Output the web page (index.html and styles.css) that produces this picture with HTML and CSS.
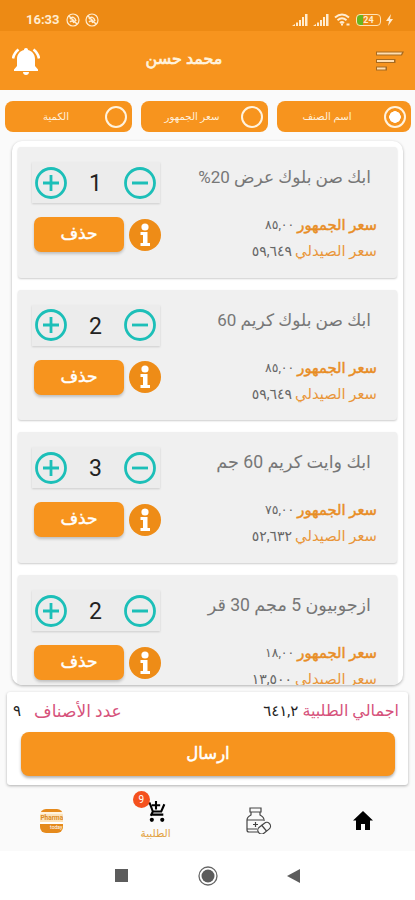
FILE: index.html
```html
<!DOCTYPE html>
<html lang="ar" dir="rtl">
<head>
    <meta charset="UTF-8">
    <meta name="viewport" content="width=device-width, initial-scale=1.0">
    <title>الطلبية</title>
    <link rel="stylesheet" href="styles.css">
</head>
<body>
    <!-- Shared icons -->
    <svg class="icon-defs" width="0" height="0">
        <symbol id="icon-plus" viewBox="0 0 32 32">
            <circle cx="16" cy="16" r="14.5" fill="none" stroke="currentColor" stroke-width="2.8"/>
            <path d="M8 16h16M16 8v16" stroke="currentColor" stroke-width="2.8"/>
        </symbol>
        <symbol id="icon-minus" viewBox="0 0 32 32">
            <circle cx="16" cy="16" r="14.5" fill="none" stroke="currentColor" stroke-width="2.8"/>
            <path d="M8 16h16" stroke="currentColor" stroke-width="2.8"/>
        </symbol>
        <symbol id="icon-info" viewBox="0 0 32 32">
            <circle cx="16" cy="16" r="16" fill="#ee8c17"/>
            <circle cx="16" cy="8" r="3.6" fill="#fff"/>
            <path d="M11.500 13h7v11H21v3h-9.500v-3H14v-8h-2.500z" fill="#fff"/>
        </symbol>
        <symbol id="icon-signal" viewBox="0 0 16 12">
            <path d="M0 12l3-2v2zM4 8.500h2V12H4zM7 6h2v6H7zM10 3h2v9h-2zM13 0h2.500v12H13z" fill="currentColor"/>
        </symbol>
        <symbol id="icon-mute" viewBox="0 0 14 14">
            <circle cx="7" cy="7" r="6" fill="none" stroke="currentColor" stroke-width="1.200"/>
            <path d="M3 3l8 8M4 6c2-3 5-2 6 2M4 9c2-2 3-1 4 1" fill="none" stroke="currentColor" stroke-width="1.500"/>
        </symbol>
    </svg>

    <div class="status-bar" dir="ltr">
        <span class="clock">16:33</span>
        <svg class="mute"><use href="#icon-mute"/></svg>
        <svg class="mute"><use href="#icon-mute"/></svg>
        <span class="spacer"></span>
        <svg class="signal"><use href="#icon-signal"/></svg>
        <svg class="signal"><use href="#icon-signal"/></svg>
        <svg class="wifi" viewBox="0 0 16 13" fill="none" stroke="currentColor" stroke-width="2">
            <path d="M1 4.500q7-6 14 0M3.500 7.300q4.500-4 9 0M6 10q2-1.700 4 0"/>
            <path d="M8 10.500v2M12.500 11.500h3"/>
        </svg>
        <span class="battery">24</span>
        <svg class="bolt" viewBox="0 0 7 12"><path d="M5 0L0 7h3l-1 5 5-7H4z" fill="currentColor"/></svg>
    </div>

    <header class="main-header">
        <svg class="menu" viewBox="0 0 28 20">
            <path d="M0 .500h28l-2 4H0zM0 8h19.500v4H0zM0 15.500h11v4H0z" fill="#a66a20"/>
            <path d="M1 1.500h25l-1 2H1zM1 9h17v2H1zM1 16.500h8.500v2H1z" fill="#ffdeb0"/>
        </svg>
        <h1>محمد حسن</h1>
        <svg class="bell" viewBox="0 0 28 28" fill="#fff">
            <path d="M14 1c-1.300 0-2 .8-2 2-4.300 1-7 4.500-7 9v7l-3 3.500V24h24v-1.500L23 19v-7c0-4.500-2.700-8-7-9 0-1.200-.7-2-2-2zM11 25h6c0 1.800-1.300 3-3 3s-3-1.200-3-3z"/>
            <path d="M6.500 2.500Q2 6 1 11.500M21.500 2.500Q26 6 27 11.500" fill="none" stroke="#fff" stroke-width="2.600"/>
        </svg>
    </header>

    <div class="filters">
        <div class="filter wide">
            <span class="radio checked"></span>
            <span class="filter-label">اسم الصنف</span>
        </div>
        <div class="filter">
            <span class="radio"></span>
            <span class="filter-label">سعر الجمهور</span>
        </div>
        <div class="filter">
            <span class="radio"></span>
            <span class="filter-label">الكمية</span>
        </div>
    </div>

    <main class="list">
        <article class="card">
            <div class="details">
                <h2>ابك صن بلوك عرض 20%</h2>
                <p class="price public"><b>سعر الجمهور</b> <span>٨٥,٠٠</span></p>
                <p class="price"><b>سعر الصيدلي</b> <span>٥٩,٦٤٩</span></p>
            </div>
            <div class="controls">
                <div class="stepper"><svg><use href="#icon-minus"/></svg><span>1</span><svg><use href="#icon-plus"/></svg></div>
                <div class="actions"><svg><use href="#icon-info"/></svg><button class="delete">حذف</button></div>
            </div>
        </article>
        <article class="card">
            <div class="details">
                <h2>ابك صن بلوك كريم 60</h2>
                <p class="price public"><b>سعر الجمهور</b> <span>٨٥,٠٠</span></p>
                <p class="price"><b>سعر الصيدلي</b> <span>٥٩,٦٤٩</span></p>
            </div>
            <div class="controls">
                <div class="stepper"><svg><use href="#icon-minus"/></svg><span>2</span><svg><use href="#icon-plus"/></svg></div>
                <div class="actions"><svg><use href="#icon-info"/></svg><button class="delete">حذف</button></div>
            </div>
        </article>
        <article class="card">
            <div class="details">
                <h2 class="large">ابك وايت كريم 60 جم</h2>
                <p class="price public"><b>سعر الجمهور</b> <span>٧٥,٠٠</span></p>
                <p class="price"><b>سعر الصيدلي</b> <span>٥٢,٦٣٢</span></p>
            </div>
            <div class="controls">
                <div class="stepper"><svg><use href="#icon-minus"/></svg><span>3</span><svg><use href="#icon-plus"/></svg></div>
                <div class="actions"><svg><use href="#icon-info"/></svg><button class="delete">حذف</button></div>
            </div>
        </article>
        <article class="card">
            <div class="details">
                <h2 class="large">ازجوبيون 5 مجم 30 قر</h2>
                <p class="price public"><b>سعر الجمهور</b> <span>١٨,٠٠</span></p>
                <p class="price"><b>سعر الصيدلي</b> <span>١٣,٥٠٠</span></p>
            </div>
            <div class="controls">
                <div class="stepper"><svg><use href="#icon-minus"/></svg><span>2</span><svg><use href="#icon-plus"/></svg></div>
                <div class="actions"><svg><use href="#icon-info"/></svg><button class="delete">حذف</button></div>
            </div>
        </article>
    </main>

    <section class="summary">
        <div class="totals">
            <span class="total-label">اجمالي الطلبية</span>
            <span class="total-value">٦٤١,٢</span>
            <span class="count-label">عدد الأصناف</span>
            <span class="count-value">٩</span>
        </div>
        <button class="send">ارسال</button>
    </section>

    <nav class="bottom-nav">
        <a class="nav-item">
            <svg width="20" height="19" viewBox="0 0 20 19"><path d="M10 0l10 9.500h-3V19h-5v-6H8v6H3V9.500H0z"/></svg>
        </a>
        <a class="nav-item">
            <svg width="26" height="27" viewBox="0 0 26 27" fill="none" stroke="#444" stroke-width="1.200">
                <path d="M4 1h11v4H4zM5 5v3Q1 10 1 13v10q0 2 2 2h9M14 5v3q4 2 4 5v1M1 13h16M1 22h10M7 17.500h5M9.500 15v5"/>
                <rect x="11" y="17.500" width="14" height="7.500" rx="3.700" transform="rotate(-38 18 21)" fill="#fafafa"/>
                <path d="M15.500 18l5 6"/>
            </svg>
        </a>
        <a class="nav-item cart">
            <span class="badge">9</span>
            <svg width="20" height="24" viewBox="0 0 18 23">
                <path d="M0 4h3l3 8h8l3-7M5 15h11M5 6h8M9 2v8M4 16l2-4" fill="none" stroke="#000" stroke-width="2"/>
                <circle cx="5" cy="20" r="2"/><circle cx="15" cy="20" r="2"/>
            </svg>
            <span class="nav-label">الطلبية</span>
        </a>
        <a class="nav-item">
            <span class="brand" dir="ltr"><span class="brand-name">Pharma</span><span class="brand-sub">today</span></span>
        </a>
    </nav>

    <div class="system-nav" dir="ltr">
        <svg width="13" height="13"><path d="M0 0h13v13H0z" fill="#5c5c5c"/></svg>
        <svg width="20" height="20"><circle cx="10" cy="10" r="9" fill="none" stroke="#666" stroke-width="1.300"/><circle cx="10" cy="10" r="6.500" fill="#5c5c5c"/></svg>
        <svg width="13" height="14"><path d="M13 0v14L0 7z" fill="#5c5c5c"/></svg>
    </div>
</body>
</html>
```
FILE: styles.css
```css
* {
    box-sizing: border-box;
}

body {
    margin: 0;
    height: 900px;
    overflow: hidden;
    background-color: #fafafa;
    font-family: Roboto, "DejaVu Sans", sans-serif;
}

h1, h2, p {
    margin: 0;
    font-weight: normal;
}

button {
    border: none;
    padding: 0;
    color: white;
    background-color: #f7941e;
    font-family: inherit;
    -webkit-text-stroke: 0.5px;
}

svg {
    display: block;
    flex: none;
}

.icon-defs {
    position: absolute;
}

/* Status bar */
.status-bar {
    height: 31px;
    padding: 8px 22px 0 26px;
    display: flex;
    align-items: center;
    background-color: #ed8a14;
    color: #ffecd0;
}

.clock {
    width: 34px;
    margin-right: 6px;
    font-size: 13px;
    font-weight: bold;
}

.mute {
    width: 14px;
    height: 14px;
    margin-right: 5px;
}

.spacer {
    flex: 1;
}

.signal {
    width: 16px;
    height: 12px;
    margin-right: 5px;
}

.wifi {
    width: 16px;
    height: 13px;
    margin-right: 6px;
}

.battery {
    width: 25px;
    height: 12px;
    border: 1.5px solid #ffe3b5;
    border-radius: 4px;
    background: linear-gradient(to right, #69b51e 6px, transparent 6px);
    font-size: 9px;
    line-height: 10px;
    font-weight: bold;
    text-align: center;
}

.bolt {
    width: 7px;
    height: 12px;
    margin-left: 5px;
}

/* Header */
.main-header {
    height: 59px;
    padding: 0 11px 0 12px;
    display: flex;
    align-items: center;
    background-color: #f7941e;
}

.menu {
    width: 28px;
    height: 20px;
}

.main-header h1 {
    flex: 1;
    padding: 0 48px 5px 0;
    color: #fff3df;
    font-size: 16px;
    text-align: center;
    -webkit-text-stroke: 0.7px;
}

.bell {
    width: 28px;
    height: 28px;
}

/* Filter row */
.filters {
    padding: 11px 4px 0 5px;
    display: flex;
    gap: 9px;
}

.filter {
    width: 127px;
    height: 31px;
    padding: 0 5px;
    display: flex;
    align-items: center;
    background-color: #f7941e;
    border-radius: 8px;
}

.filter.wide {
    width: 134px;
}

.radio {
    width: 22px;
    height: 22px;
    border: 2px solid #fff3df;
    border-radius: 50%;
}

.radio.checked {
    background: radial-gradient(circle, white 5.5px, transparent 6px);
}

.filter-label {
    flex: 1;
    padding-right: 3px;
    color: #fff0dc;
    font-size: 10.2px;
    text-align: center;
}

.wide .filter-label {
    padding-right: 12px;
}

/* Order items */
.list {
    width: 391px;
    height: 544px;
    margin: 9px 12px 0 0;
    padding: 6px 6px 0 6px;
    overflow: hidden;
    display: flex;
    flex-direction: column;
    gap: 12px;
    background-color: white;
    border-radius: 10px;
    box-shadow: 0 1px 3px rgba(0, 0, 0, 0.3);
}

.card {
    height: 130.7px;
    padding: 15px 20px 0 14px;
    flex: none;
    display: flex;
    justify-content: space-between;
    background-color: #f0f0f0;
    border-radius: 3px;
    box-shadow: 0 1px 2px rgba(0, 0, 0, 0.2);
}

.details h2 {
    height: 50px;
    padding-right: 6px;
    color: #777;
    font-size: 17px;
    line-height: 30px;
    white-space: nowrap;
}

.details h2.large {
    font-size: 17.6px;
}

.price {
    display: flex;
    gap: 3px;
    color: #666;
    font-size: 14px;
    line-height: 26px;
    white-space: nowrap;
}

.price b {
    color: #e9963a;
    font-size: 14.8px;
    font-weight: normal;
}

.price.public {
    font-size: 12.5px;
}

.price.public b {
    color: #e88d25;
    -webkit-text-stroke: 0.5px;
}

.controls {
    width: 129px;
}

.stepper {
    width: 128px;
    height: 41px;
    margin-right: 1px;
    padding: 0 4px 0 3px;
    display: flex;
    align-items: center;
    justify-content: space-between;
    background-color: #ececec;
    color: #1cbfb8;
    box-shadow: 0 1px 2px rgba(0, 0, 0, 0.15);
}

.stepper svg {
    width: 32px;
    height: 32px;
}

.stepper span {
    padding-top: 2px;
    color: #222;
    font-size: 23px;
}

.actions {
    margin-top: 14px;
    display: flex;
    align-items: center;
    gap: 5px;
}

.actions svg {
    width: 32px;
    height: 32px;
}

.delete {
    width: 90px;
    height: 35px;
    padding-bottom: 3px;
    border-radius: 7px;
    font-size: 17px;
    box-shadow: 0 2px 3px rgba(0, 0, 0, 0.2);
}

/* Totals and submit */
.summary {
    height: 93px;
    margin: 7px 7px 0;
    padding: 5px 13px 0 14px;
    background-color: white;
    border-radius: 3px;
    box-shadow: 0 1px 3px rgba(0, 0, 0, 0.3);
}

.totals {
    height: 35px;
    margin: 0 -4px 0 -8px;
    display: flex;
    align-items: flex-start;
    gap: 4px;
    color: #222;
    font-size: 16px;
    line-height: 28px;
    white-space: nowrap;
}

.total-value {
    font-size: 15px;
}

.total-label,
.count-label {
    color: #d6527b;
}

.count-label {
    margin-right: auto;
    font-size: 17px;
}

.count-value {
    margin-right: 9px;
    font-size: 15px;
}

.send {
    width: 374px;
    height: 44px;
    padding-bottom: 2px;
    border-radius: 8px;
    font-size: 16.5px;
    box-shadow: 0 2px 3px rgba(0, 0, 0, 0.3);
}

/* Bottom navigation */
.bottom-nav {
    height: 66px;
    display: grid;
    grid-template-columns: repeat(4, 1fr);
}

.nav-item {
    position: relative;
    display: flex;
    flex-direction: column;
    align-items: center;
    justify-content: center;
    padding-top: 5px;
}

.nav-item.cart {
    justify-content: flex-start;
    padding-top: 14px;
}

.badge {
    position: absolute;
    top: 6px;
    left: 29px;
    width: 17px;
    height: 17px;
    border-radius: 50%;
    background-color: #f4511e;
    color: white;
    font-size: 10px;
    line-height: 17px;
    text-align: center;
}

.nav-label {
    color: #e2a243;
    font-size: 10.5px;
    line-height: 22px;
}

.brand {
    width: 23px;
    height: 24px;
    display: flex;
    flex-direction: column;
    border-radius: 6px;
    background: linear-gradient(#e58a1c 3px, #fff3df 3px, #fff3df 5px, #fbe3bd 5px, #fbe3bd 13px, #fff 13px, #fff 15px, #e58a1c 15px);
    overflow: hidden;
}

.brand-name {
    padding-top: 4px;
    color: #dc8b25;
    font-size: 6.5px;
    line-height: 10px;
    font-weight: bold;
}

.brand-sub {
    padding-right: 1px;
    color: white;
    font-size: 5px;
    line-height: 9px;
    text-align: right;
}

/* Android buttons */
.system-nav {
    height: 49px;
    padding: 0 115px;
    display: flex;
    align-items: center;
    justify-content: space-between;
    background-color: white;
}
```
